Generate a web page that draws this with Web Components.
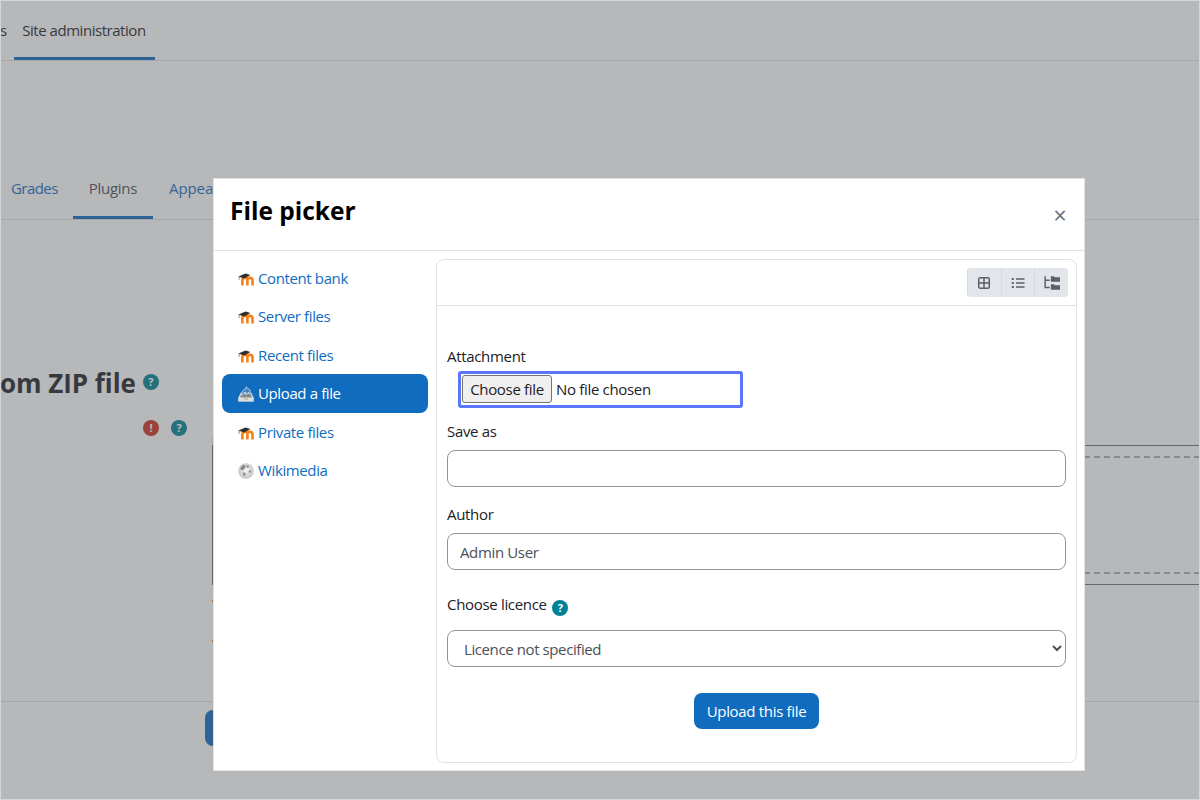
<!DOCTYPE html>
<html lang="en"><head><meta charset="utf-8"><title>File picker</title>
<style>
html,body{margin:0;padding:0;height:100%;overflow:hidden;background:#fff}
body{font:15px/22.5px "Open Sans","Liberation Sans",sans-serif;letter-spacing:-.32px;color:#1d2125}
</style></head><body>
<template id="t-help"><style>
:host{display:inline-flex;width:16px;height:16px;border-radius:50%;background:var(--c,#008196);color:#fff;align-items:center;justify-content:center;font:700 11px/16px "Open Sans",sans-serif;letter-spacing:0;flex:none}
</style><slot>?</slot></template>

<template id="t-tabs"><style>
:host{display:flex;border-bottom:1px solid #dee2e6;height:60px;box-sizing:content-box;white-space:nowrap;overflow:hidden;letter-spacing:-.46px}
</style><slot></slot></template>

<template id="t-tab"><style>
:host{display:block;padding:19px 8px 0;box-sizing:border-box;height:60px;color:#0f6cbf}
:host([active]){color:#1d2125;border-bottom:3px solid #0f6cbf}
:host([wide]){padding-left:16px;padding-right:16px}
</style><slot></slot></template>

<template id="t-page"><style>
:host{display:block;width:1200px;height:800px;overflow:hidden}
.heading{font:700 26px/30px "Open Sans",sans-serif;letter-spacing:-.05px;margin-top:148px;display:flex;align-items:center;gap:7px;height:30px}
.heading x-help{margin-top:-2px}
.status{display:flex;gap:12px;margin:22px 0 0 143px;height:16px}
.status-rule{margin:0 0 0 212px;width:1px;height:9px;background:#dee2e6}
.dnd{margin-left:212px;height:140px;border:solid #6a737b;border-width:1px 0 1px 1px;padding:10px 0;box-sizing:border-box}
.dash{height:100%;border:dashed #a9aeb4;border-width:2px 0;box-sizing:border-box}
.tick{width:1px;height:2px;background:#f98012;margin-left:212px}
.hr{border-top:1px solid #dee2e6;margin-top:59px}
.btn{margin:8px 0 0 205px;width:120px;height:36px;border-radius:8px;background:#0f6cbf;color:#fff;display:flex;align-items:center;justify-content:center}
</style>
<x-tabs><x-tab style="color:#1d2125;padding:19px 7px 0 0">s</x-tab><x-tab active style="padding-left:8.5px;padding-right:9px">Site administration</x-tab></x-tabs>
<div style="height:97px"></div>
<x-tabs style="margin-left:-5px;height:61px"><x-tab wide style="padding-right:15px;letter-spacing:-.55px">Grades</x-tab><x-tab wide active style="color:#495057;height:61px;letter-spacing:-.3px;padding-right:15.500px">Plugins</x-tab><x-tab wide style="padding-left:16.500px;letter-spacing:-.1px">Appearance</x-tab></x-tabs>
<div class="heading">om ZIP file<x-help></x-help></div>
<div class="status"><x-help style="--c:#ca3120">!</x-help><x-help></x-help></div>
<div class="status-rule"></div>
<div class="dnd"><div class="dash"></div></div>
<div class="tick" style="margin-top:15px"></div><div class="tick" style="margin-top:38px"></div>
<div class="hr"></div>
<div class="btn">Install</div>
</template>

<template id="t-modal"><style>
:host{position:absolute;left:213px;top:178px;width:872px;height:593px;background:#fff;box-sizing:border-box;border:1px solid #e1e2e4;display:flex;flex-direction:column;color:#1d2125}
header{height:72px;box-sizing:border-box;border-bottom:1px solid #dee2e6;display:flex;align-items:center;justify-content:space-between;padding:0 16px 8px 16px;flex:none}
h1{font:700 24.5px/30px "Open Sans",sans-serif;letter-spacing:0;color:#000;margin:0}
.close{color:#6a7077;font:400 23px/22px "Open Sans",sans-serif;letter-spacing:0;margin-top:9px;width:16px;text-align:center}
.body{flex:1;display:flex;gap:8px;padding:8px 7px 7px 8px;min-height:0}
nav{width:206px;flex:none;display:flex;flex-direction:column;letter-spacing:-.38px;margin-top:-.5px}
</style>
<header><h1>File picker</h1><span class="close">×</span></header>
<div class="body"><nav><slot name="nav"></slot></nav><slot></slot></div>
</template>

<template id="t-repo"><style>
:host{display:flex;align-items:center;gap:4px;height:38.5px;padding-left:16px;border-radius:8px;color:#0f6cbf;flex:none}
:host([active]){background:#0f6cbf;color:#fff}
svg{width:16px;height:16px;flex:none;margin-top:2px}
</style><span id="i" style="display:contents"></span><slot></slot></template>

<template id="t-panel"><style>
:host{display:flex;flex-direction:column;flex:1;min-width:0;border:1px solid #dee2e6;border-radius:8px;box-sizing:border-box}
.bar{height:46px;flex:none;border-bottom:1px solid #dee2e6;display:flex;justify-content:flex-end;padding:8px 8px 0;box-sizing:border-box}
.content{padding:39px 10px 0}
</style><div class="bar"><slot name="toolbar"></slot></div><div class="content"><slot></slot></div></template>

<template id="t-toolbar"><style>
:host{display:flex;height:29px;width:101px;background:#e2e5e9;border-radius:4px;overflow:hidden}
span{flex:1;display:flex;align-items:center;justify-content:center;border-left:1px solid #d6d9dd}
span:first-child{border-left:0}
svg{width:14px;height:14px;fill:none;stroke:#5b6167}
</style>
<span><svg viewBox="0 0 14 14" stroke-width="1.5"><rect x="1.75" y="1.75" width="10.5" height="10.5" rx="1.5"/><path d="M7 2v10M2 7h10"/></svg></span>
<span><svg viewBox="0 0 14 14"><path d="M5 3h8.5M5 7h8.5M5 11h8.5" stroke-width="1.3"/><path d="M.8 3h2M.8 7h2M.8 11h2" stroke-width="2"/></svg></span>
<span><svg viewBox="0 0 14 14" style="width:16px;height:16px"><path d="M1 1v10h4M1 4.5h4" stroke-width="1.3"/><path d="M6 1h2.6l.9 1H14v4H6zM6 8h2.6l.9 1H14v4H6z" fill="#5b6167" stroke="none"/></svg></span>
</template>

<template id="t-field"><style>
:host{display:block}
label{display:block;height:22.5px}
</style><label><slot></slot></label></template>

<template id="t-input"><style>
:host{display:block}
input{display:block;box-sizing:border-box;width:100%;height:37px;border:1px solid #8f959e;border-radius:8px;background:#fff;color:#495057;font:inherit;letter-spacing:-.36px;padding:2px 12px 0;margin:0;outline:0}
</style><input type="text"></template>

<template id="t-select"><style>
:host{display:block}
select{display:block;box-sizing:border-box;width:100%;height:37px;border:1px solid #8f959e;border-radius:8px;background:#fff;color:#495057;font:inherit;letter-spacing:-.4px;padding:2px 0 0 12px;margin:0;outline:0}
</style><select><option>Licence not specified</option></select></template>

<template id="t-file"><style>
:host{display:flex;align-items:center;gap:4px;box-sizing:border-box;width:285px;height:37px;margin-left:11px;border:3px solid #5b76fb;border-radius:3px;padding-left:1px;background:#fff}
button{height:28px;width:90px;box-sizing:border-box;border:1px solid #767676;border-radius:3px;background:#efefef;color:#1d2125;font:inherit;letter-spacing:inherit;padding:0}
</style><button type="button">Choose file</button><span>No file chosen</span></template>

<x-page></x-page>
<div style="position:absolute;inset:0;background:rgba(88,90,95,.43)"></div>
<x-modal>
  <x-repo slot="nav" icon="m">Content bank</x-repo>
  <x-repo slot="nav" icon="m">Server files</x-repo>
  <x-repo slot="nav" icon="m">Recent files</x-repo>
  <x-repo slot="nav" icon="u" active>Upload a file</x-repo>
  <x-repo slot="nav" icon="m">Private files</x-repo>
  <x-repo slot="nav" icon="w">Wikimedia</x-repo>
  <x-panel>
    <x-toolbar slot="toolbar"></x-toolbar>
    <x-field>Attachment</x-field>
    <x-file style="margin-top:3px"></x-file>
    <x-field style="margin-top:12px">Save as</x-field>
    <x-input style="margin-top:7.5px"></x-input>
    <x-field style="margin-top:16px">Author</x-field>
    <x-input value="Admin User" style="margin-top:7.5px"></x-input>
    <x-field style="margin-top:23px">Choose licence <x-help style="margin-left:2px;vertical-align:-2px"></x-help></x-field>
    <x-select style="margin-top:14.5px"></x-select>
    <div style="display:flex;justify-content:center;margin-top:26px"><x-btn>Upload this file</x-btn></div>
  </x-panel>
</x-modal>
<div style="position:absolute;inset:0;border:1px solid #d4d5d7;pointer-events:none"></div>
<script>
const icons={
m:`<svg viewBox="0 0 16 16"><path d="M4.400 14.500V9c0-1.300.8-2.100 2.100-2.100h5.400c1.600 0 2.600.9 2.600 2.200v5.400" fill="none" stroke="#f98012" stroke-width="2.6"/><path d="M9.400 7.200v7.300" stroke="#f98012" stroke-width="2.6"/><path d="M.3 5.400 7.600 2.600l4.800 1.400-6.200 3.600z" fill="#2f2f2f"/><path d="M1.100 5.500v3.200" stroke="#666" stroke-width=".8"/></svg>`,
u:`<svg viewBox="0 0 16 16"><path d="M2.800 6.600h10.400l2.400 5v3.800H.4v-3.800z" fill="#d9d9d6"/><path d="M3.400 7.800h9.200l1.500 3.600H1.900z" fill="#7f8a94"/><path d="M.4 11.800h15.200v3.600H.4z" fill="#dededb"/><path d="M5.600 12.600h4.800l-.6 1H6.200z" fill="#a8a8a5"/><path d="M3.400 9.400C3.200 5.600 5.600 3.300 8 3.100V.8l4.800 3.900L8 8.600V6.200C6.200 6.300 4.700 7.600 3.400 9.400z" fill="#3f7fbf" stroke="#cfdfee" stroke-width=".8"/></svg>`,
w:`<svg viewBox="0 0 16 16"><defs><radialGradient id="g" cx=".5" cy=".45" r=".65"><stop offset="0" stop-color="#f7f7f7"/><stop offset="1" stop-color="#bababa"/></radialGradient></defs><circle cx="8" cy="8" r="7.800" fill="url(#g)"/><path d="M2.200 5 5.500 1.600 7.500 3.200 6.800 5.600 5 7.200 2.800 6.800zM8.500 2l2.500.9-.8 2-1.900-.8zM5.300 9.200l2.500.8-.8 3-2-1zM11 7.500h2.400l-.9 2.500-1.900-1z" fill="#8a8a8a"/></svg>`};
function def(name,tid,setup){customElements.define(name,class extends HTMLElement{constructor(){super();this.attachShadow({mode:'open'}).appendChild(document.getElementById(tid).content.cloneNode(true))}connectedCallback(){setup&&setup(this)}})}
def('x-help','t-help');
def('x-tabs','t-tabs');
def('x-tab','t-tab');
def('x-page','t-page');
def('x-modal','t-modal');
def('x-repo','t-repo',e=>{e.shadowRoot.getElementById('i').innerHTML=icons[e.getAttribute('icon')]});
def('x-panel','t-panel');
def('x-toolbar','t-toolbar');
def('x-field','t-field');
def('x-file','t-file');
def('x-select','t-select');
def('x-input','t-input',e=>{if(e.hasAttribute('value'))e.shadowRoot.querySelector('input').setAttribute('value',e.getAttribute('value'))});
customElements.define('x-btn',class extends HTMLElement{constructor(){super();this.attachShadow({mode:'open'}).innerHTML=`<style>:host{display:inline-flex;align-items:center;justify-content:center;height:36px;width:125px;padding-top:1px;box-sizing:border-box;border-radius:8px;background:#0f6cbf;color:#fff}</style><slot></slot>`}});
</script>
</body></html>
